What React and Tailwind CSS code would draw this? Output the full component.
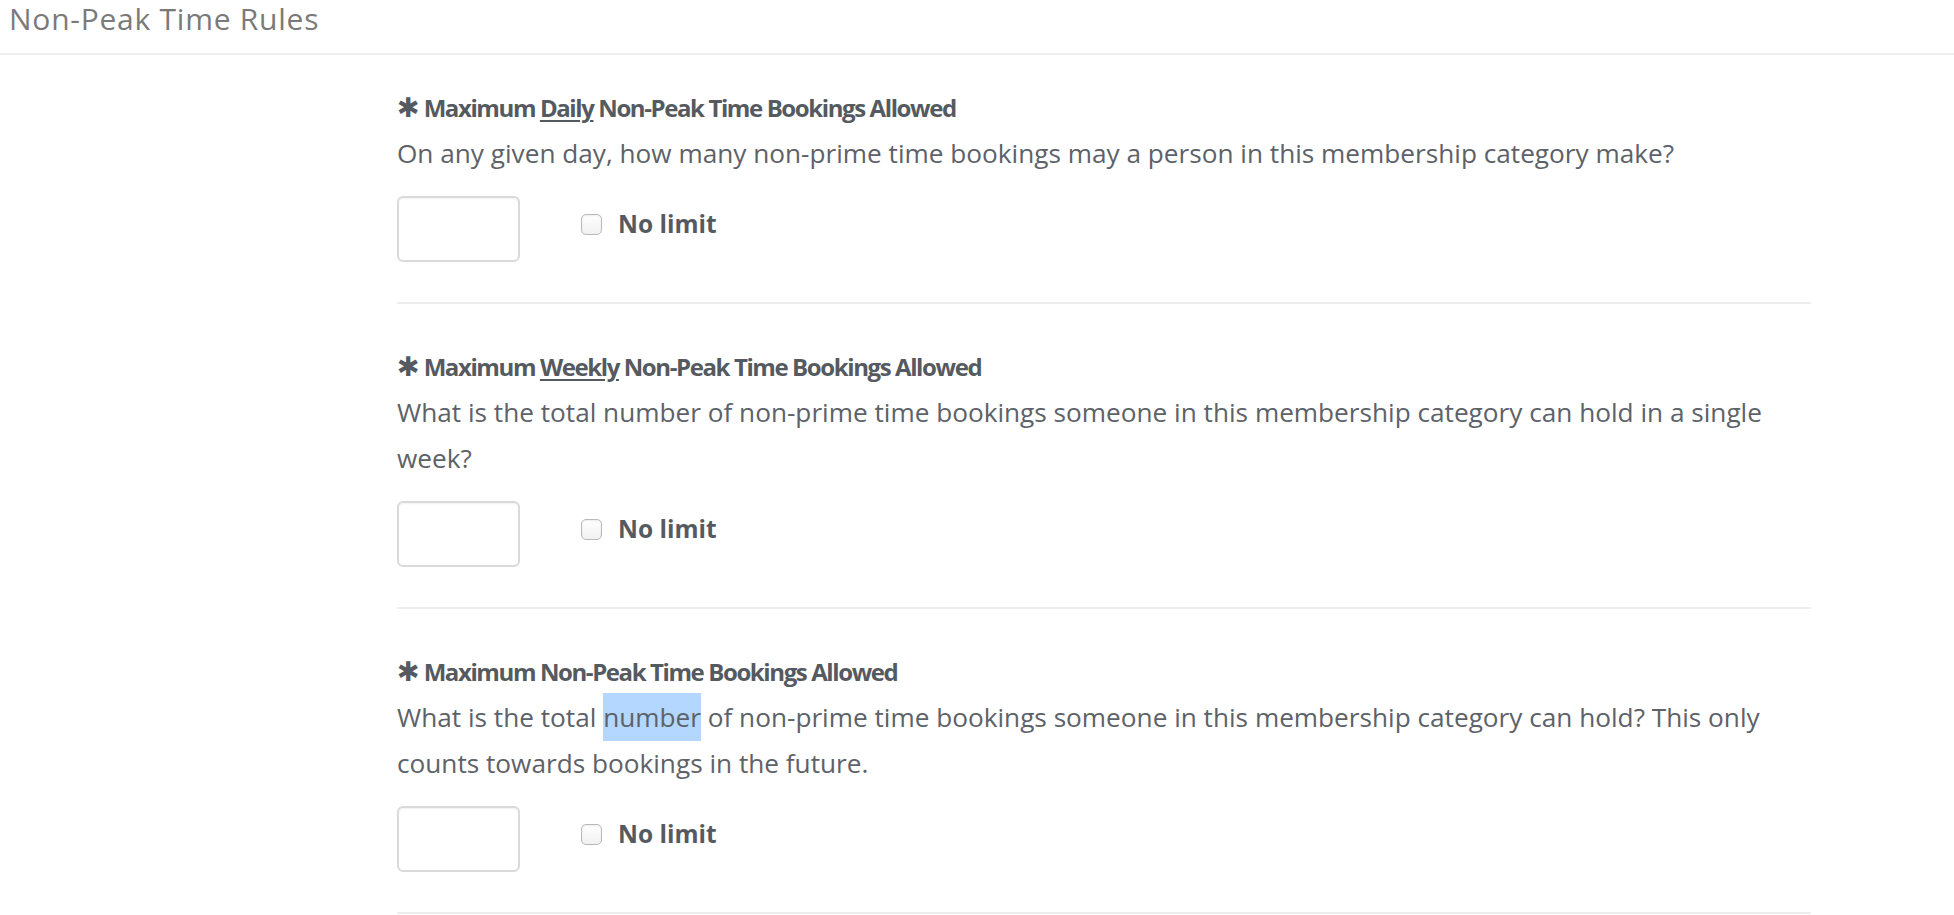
import { useState } from 'react'

const rules = [
  {
    key: 'daily',
    label: ['Maximum ', 'Daily', ' Non-Peak Time Bookings Allowed'],
    desc: 'On any given day, how many non-prime time bookings may a person in this membership category make?',
  },
  {
    key: 'weekly',
    label: ['Maximum ', 'Weekly', ' Non-Peak Time Bookings Allowed'],
    desc: 'What is the total number of non-prime time bookings someone in this membership category can hold in a single week?',
  },
  {
    key: 'total',
    label: ['Maximum Non-Peak Time Bookings Allowed'],
    desc: (
      <>
        What is the total <span className="bg-[#b3d7fe] py-[6px]">number</span> of non-prime time bookings someone in this membership category can hold? This only counts towards bookings in the future.
      </>
    ),
  },
]

function RuleRow({ rule, first }) {
  const [value, setValue] = useState('')
  const [noLimit, setNoLimit] = useState(false)
  const [pre, em, post] = rule.label

  return (
    <section className={`${first ? 'pt-[31px]' : 'pt-[41px]'} pb-10 border-b-2 border-[#eeeeee]`}>
      {/* label */}
      <div className="text-[24px] leading-[44px] font-bold tracking-[-1.4px] text-[#555a60]">
        <span className="font-['DejaVu_Sans',sans-serif] text-[27px] leading-none tracking-normal mr-[4px]">✱</span>
        {pre}
        {em && <span className="underline underline-offset-[3px] decoration-[1.5px]">{em}</span>}
        {post}
      </div>

      <p className="text-[26.2px] leading-[46px] text-[#5d6269] pr-[20px]">{rule.desc}</p>

      <div className="mt-5 flex items-center">
        <input
          value={value}
          onChange={e => setValue(e.target.value)}
          className="w-[123px] h-[66px] rounded-[6px] border-2 border-[#dadada] bg-white px-3 text-[24px] text-[#555] outline-none shadow-[inset_0_1px_2px_rgba(0,0,0,0.06)]"
        />
        <label className="ml-[61px] mb-[10px] flex items-center gap-4 cursor-pointer select-none" onClick={() => setNoLimit(n => !n)}>
          <span className={`w-[21px] h-[21px] rounded-[5px] border border-[#b9b9b9] shadow-[inset_0_1px_2px_rgba(0,0,0,0.08)] ${noLimit ? 'bg-[#4a90e2]' : 'bg-gradient-to-b from-white to-[#f1f1f1]'}`} />
          <span className="text-[24.5px] leading-8 font-bold text-[#555a60]">No limit</span>
        </label>
      </div>
    </section>
  )
}

export default function App() {
  return (
    <div className="min-h-screen bg-white font-['Open_Sans',sans-serif]">
      <div className="pl-[9px] pb-[15px] border-b-2 border-[#eeeeee]">
        <h2 className="text-[30px] leading-[38px] tracking-[0.75px] text-[#7a7a7a]">Non-Peak Time Rules</h2>
      </div>

      <div className="pl-[397px]">
        <div className="w-[1414px]">
          {rules.map((r, i) => (
            <RuleRow key={r.key} rule={r} first={i === 0} />
          ))}
        </div>
      </div>
    </div>
  )
}
